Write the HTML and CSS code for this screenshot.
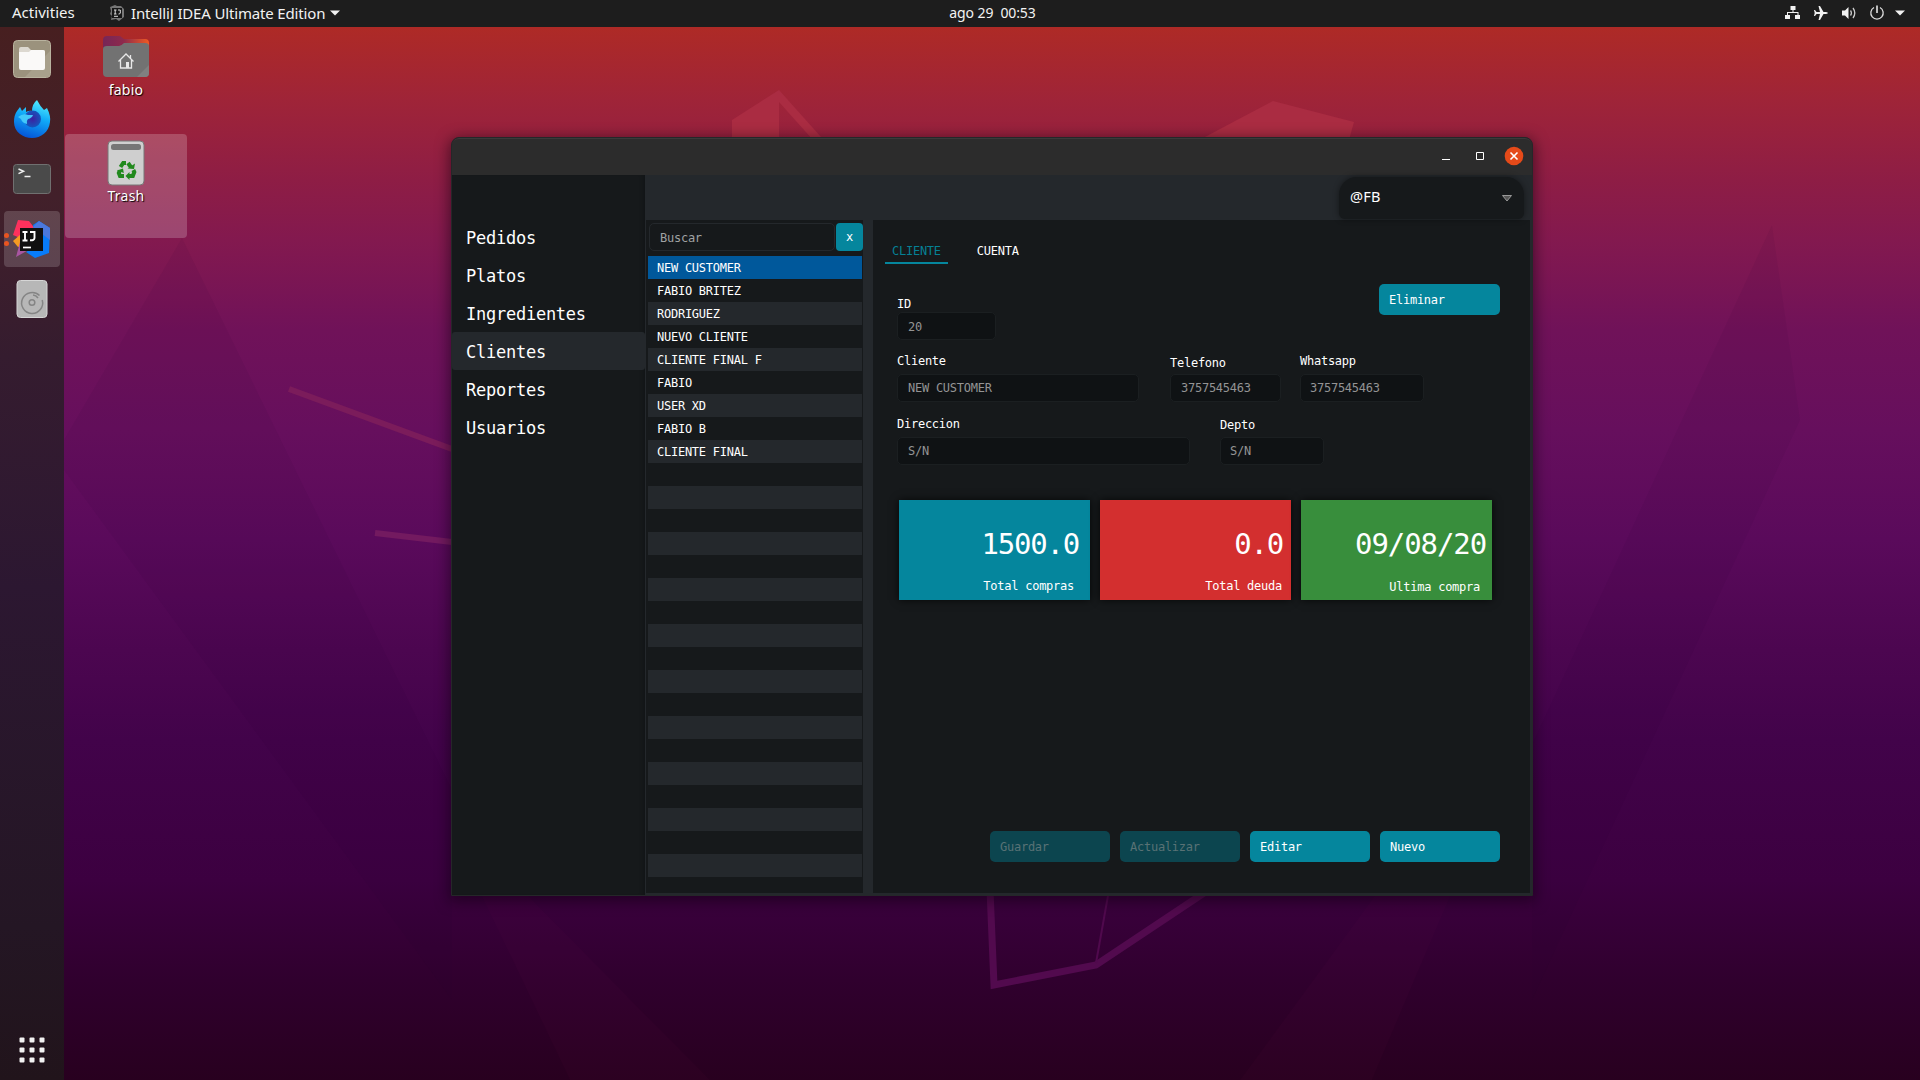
FILE: index.html
```
<!DOCTYPE html>
<html lang="es">
<head>
<meta charset="utf-8">
<title>Clientes</title>
<link rel="stylesheet" href="styles.css">
</head>
<body>
<svg class="wallpaper" viewBox="0 0 1920 1080" aria-hidden="true">
  <g fill="#1c0030" fill-opacity=".06">
    <path d="M182 238L64 440V470L452 1000V790Z"/>
    <path d="M1772 225L1532 745V1000L1800 420Z"/>
  </g>
  <g fill="#ff2090" fill-opacity=".02">
    <path d="M482 896H528L710 1080H570Z"/>
    <path d="M1375 896H1450L1372 1080H1240Z"/>
  </g>
  <g fill="#aa2c42">
    <path d="M732 120L779 90V137H732Z"/>
    <path d="M779 90L821 137V140H813L779 102Z"/>
    <path d="M1203 138L1273 101L1354 122L1349 140Z"/>
  </g>
  <path d="M289 389L452 449" stroke="#7b1c5b" stroke-width="6"/>
  <path d="M375 533L452 542" stroke="#731a60" stroke-width="6"/>
  <path d="M990 890L994 985L1096 965L1210 889" fill="none" stroke="#520a4e" stroke-width="7"/>
  <path d="M1109 890L1096 963" stroke="#50094d" stroke-width="2"/>
</svg>

<header class="topbar">
  <span class="activities">Activities</span>
  <div class="appmenu">
    <svg width="16" height="16" viewBox="0 0 16 16"><path d="M1 2L6 0L8 1L12 1L15 4V12L10 16L7 14L2 15L3 11L1 9L2 6Z" fill="#777"/><path d="M3 3h10v10H3z" fill="#171717"/><path d="M5 5h2.500M6.200 5v4M5 9h2.500M9 5h2.300v3q0 1-1.800 1M5 11.300h4" stroke="#ddd" fill="none"/></svg>
    <span class="appname">IntelliJ IDEA Ultimate Edition</span>
    <svg width="10" height="6" viewBox="0 0 10 6"><path d="M0 .5h10L5 5.500z" fill="#f2f2f2"/></svg>
  </div>
  <span class="clock">ago 29&nbsp; 00:53</span>
  <div class="tray">
    <svg width="16" height="16" viewBox="0 0 16 16"><path d="M5.500 1h5v4h-2v2h5v3h1.500v4h-5v-4h2.500V8H3v2h2v4H0v-4h2V7h5.500V5h-2z" fill="#f2f2f2"/></svg>
    <svg width="16" height="16" viewBox="0 0 16 16"><path d="M1 5h1l1.500 2H7L5.500 1H7l3.500 6H13q2 .5 2 1t-2 1h-2.500L7 15H5.500L7 9H3.500L2 11H1l.7-3z" fill="#f2f2f2"/></svg>
    <svg width="16" height="16" viewBox="0 0 16 16"><path d="M1 5.500h3L7.500 2v12L4 10.500H1z" fill="#f2f2f2"/><path d="M9.500 5.500q1.800 2.500 0 5M12 3q3.600 5 0 10" fill="none" stroke="#ccc" stroke-width="1.300"/></svg>
    <svg width="16" height="16" viewBox="0 0 16 16"><path d="M5 2.500A6.200 6.200 0 1 0 11 2.500" fill="none" stroke="#ddd" stroke-width="1.300"/><path d="M8 .5V8" stroke="#f2f2f2" stroke-width="1.500"/></svg>
    <svg class="caret" width="10" height="6" viewBox="0 0 10 6"><path d="M0 .5h10L5 5.500z" fill="#f2f2f2"/></svg>
  </div>
</header>

<div class="desktop">
<nav class="dock">
  <div class="slot">
    <svg width="38" height="38" viewBox="0 0 38 38"><rect x=".5" y=".5" width="37" height="37" rx="4" fill="#9b927d" stroke="#b9b39f"/><path d="M37 11V33a4 4 0 0 1-4 4H12z" fill="#a8a08c"/><path d="M6 9q0-2 2-2h7l3 3h12q2 0 2 2v5H6z" fill="#dcd8d0"/><path d="M6 12h10l2-2h12q2 0 2 2v16q0 2-2 2H8q-2 0-2-2z" fill="#faf9f8"/></svg>
  </div>
  <div class="slot">
    <svg width="38" height="38" viewBox="0 0 38 38"><defs><linearGradient id="fx" x1=".7" y1="0" x2=".4" y2="1"><stop offset="0" stop-color="#55efff"/><stop offset=".45" stop-color="#10aaf8"/><stop offset="1" stop-color="#0555d8"/></linearGradient><radialGradient id="globe"><stop offset="0" stop-color="#3d20a0"/><stop offset="1" stop-color="#1555bc"/></radialGradient></defs><path d="M4 11L7 7L9 11L13 7V12Q17 10 19 11Q19 4 24 0Q27 6 31 10L34 8Q38 16 37 22C36 32 28 38 19 38S1 32 1 22Q1 15 4 11Z" fill="url(#fx)"/><circle cx="19.500" cy="19" r="8.500" fill="url(#globe)"/><path d="M5 17q5-4 10-2h5q-1 3-5 4-2 2-1 5-5-1-6-5z" fill="#42c8fa"/></svg>
  </div>
  <div class="slot">
    <svg width="38" height="38" viewBox="0 0 38 38"><rect x=".5" y="4.500" width="37" height="29" rx="3" fill="#4a4a4a" stroke="#707070"/><path d="M5.500 9l5 2.300L5.500 13.600M11.500 16.500h6" fill="none" stroke="#eee" stroke-width="1.500"/></svg>
  </div>
  <div class="slot slot-active">
    <span class="dots"><i></i><i></i></span>
    <svg width="38" height="38" viewBox="0 0 38 38"><path d="M5 0L16 1L23 10L12 20L0 15Z" fill="#fe315d"/><path d="M0 21L8 14L12 25L5 27Z" fill="#f59a22"/><path d="M7 22L19 28L3 37Z" fill="#a855a0"/><path d="M20 5L26 1L37 8L36 33L22 38L13 32L24 25Z" fill="#087cfa"/><path d="M20 7L26 1L37 8V20Z" fill="#4b78dc"/><path d="M7 8h23v23H7z" fill="#101010"/><path d="M9.500 12h5M12 12v8M9.500 20.500h5M17 12h4.500v6q0 2.500-4.500 2.300" fill="none" stroke="#fff" stroke-width="1.900"/><path d="M10 27.500h8" stroke="#fff" stroke-width="1.700"/></svg>
  </div>
  <div class="slot">
    <svg width="32" height="38" viewBox="0 0 32 38"><rect x="1" y=".5" width="30" height="37" rx="3.500" fill="#b7b7b7" stroke="#d6d6d6"/><path d="M23.500 15.500A10.500 10.500 0 1 0 26.200 20" fill="none" stroke="#858585" stroke-width="1.500"/><circle cx="16" cy="22.500" r="2.800" fill="none" stroke="#858585" stroke-width="1.500"/><path d="M17 15a7 7 0 0 1 5 3" fill="none" stroke="#858585" stroke-width="1.500"/></svg>
  </div>
  <svg class="apps" width="26" height="26" viewBox="0 0 26 26"><g fill="#f2f2f2"><rect x=".5" y=".5" width="5" height="5" rx="1"/><rect x="10.500" y=".5" width="5" height="5" rx="1"/><rect x="20.500" y=".5" width="5" height="5" rx="1"/><rect x=".5" y="10.500" width="5" height="5" rx="1"/><rect x="10.500" y="10.500" width="5" height="5" rx="1"/><rect x="20.500" y="10.500" width="5" height="5" rx="1"/><rect x=".5" y="20.500" width="5" height="5" rx="1"/><rect x="10.500" y="20.500" width="5" height="5" rx="1"/><rect x="20.500" y="20.500" width="5" height="5" rx="1"/></g></svg>
</nav>
<div class="icons">
  <div class="shortcut">
    <svg width="46" height="44" viewBox="0 0 46 44"><defs><linearGradient id="tab"><stop offset="0" stop-color="#762657"/><stop offset=".45" stop-color="#8e2a4c"/><stop offset="1" stop-color="#f05a22"/></linearGradient></defs><path d="M0 5q0-4 4-4h13l4 3h21q4 0 4 4v20H0z" fill="url(#tab)"/><path d="M0 14q0-3 4-3h12q2 0 5-3h21q4 0 4 3v27q0 4-4 4H4q-4 0-4-4z" fill="#727272"/><path d="M46 30v8q0 4-4 4h-8z" fill="#808080"/><path d="M15.500 26.500L23 19l7.500 7.500M17.500 25v8h11v-8M27.500 20v3" fill="none" stroke="#e8e8e8" stroke-width="1.300"/><path d="M23 27h3v6h-3z" fill="#e8e8e8"/></svg>
    <span>fabio</span>
  </div>
  <div class="shortcut shortcut-on">
    <svg width="38" height="46" viewBox="0 0 38 46"><rect x="1" y="1" width="36" height="44" rx="4" fill="#cfcfcf" stroke="#777"/><rect x="4" y="4" width="30" height="6" rx="2.500" fill="#767676"/><g fill="none" stroke="#21891d" stroke-width="4"><path d="M13.500 27L16.200 23H19"/><path d="M21 23l2.800 4"/><path d="M26.300 30l1 2-1.500 4H22"/><path d="M17 36h-4L11.800 33l1-2.500"/></g><path d="M20.500 28.500l6.500.5 1-5.500zM22.500 32v8L18.500 36z" fill="#21891d"/><path d="M10 30.500l6-2 .8 4.500z" fill="#21891d"/></svg>
    <span>Trash</span>
  </div>
</div>

<main class="window">
  <div class="titlebar">
    <svg width="12" height="12" viewBox="0 0 12 12"><path d="M2 9.500h8" stroke="#fff"/></svg>
    <svg width="12" height="12" viewBox="0 0 12 12"><path d="M2.500 2.500h7v7h-7z" fill="none" stroke="#fff"/></svg>
    <svg width="20" height="20" viewBox="0 0 20 20"><circle cx="10" cy="10" r="9.300" fill="#e54a19"/><path d="M6.500 6.500l7 7M13.500 6.500l-7 7" stroke="#fff" stroke-width="1.600"/></svg>
  </div>
  <div class="app">
    <nav class="menu">
      <a>Pedidos</a><a>Platos</a><a>Ingredientes</a><a class="menu-on">Clientes</a><a>Reportes</a><a>Usuarios</a>
    </nav>
    <div class="work">
      <div class="head">
        <div class="user"><span>@FB</span><svg width="10" height="7" viewBox="0 0 10 7"><path d="M.5 .5h9L5 6z" fill="#555" stroke="#999"/></svg></div>
      </div>
      <div class="panes">
        <section class="list">
          <div class="search"><div class="query">Buscar</div><div class="clear">x</div></div>
          <div class="rows">
            <div class="row row-on">NEW CUSTOMER</div><div class="row">FABIO BRITEZ</div><div class="row">RODRIGUEZ</div><div class="row">NUEVO CLIENTE</div><div class="row">CLIENTE FINAL F</div><div class="row">FABIO</div><div class="row">USER XD</div><div class="row">FABIO B</div><div class="row">CLIENTE FINAL</div>
            <div class="row"></div><div class="row"></div><div class="row"></div><div class="row"></div><div class="row"></div><div class="row"></div><div class="row"></div><div class="row"></div><div class="row"></div><div class="row"></div><div class="row"></div><div class="row"></div><div class="row"></div><div class="row"></div><div class="row"></div><div class="row"></div><div class="row"></div><div class="row"></div><div class="row"></div>
          </div>
        </section>
        <section class="detail">
          <div class="tabs"><span class="tab tab-on">CLIENTE</span><span class="tab">CUENTA</span></div>
          <div class="line line-id">
            <label class="field w-id">ID<span class="input">20</span></label>
            <span class="btn btn-delete">Eliminar</span>
          </div>
          <div class="line line-name">
            <label class="field w-name">Cliente<span class="input">NEW CUSTOMER</span></label>
            <label class="field w-phone low">Telefono<span class="input">3757545463</span></label>
            <label class="field w-whats">Whatsapp<span class="input">3757545463</span></label>
          </div>
          <div class="line line-addr">
            <label class="field w-addr">Direccion<span class="input">S/N</span></label>
            <label class="field w-depto lower">Depto<span class="input">S/N</span></label>
          </div>
          <div class="cards">
            <div class="card teal"><b>1500.0</b><span>Total compras</span></div>
            <div class="card red"><b>0.0</b><span>Total deuda</span></div>
            <div class="card green"><b>09/08/20</b><span>Ultima compra</span></div>
          </div>
          <div class="actions">
            <span class="btn btn-off">Guardar</span><span class="btn btn-off">Actualizar</span><span class="btn">Editar</span><span class="btn">Nuevo</span>
          </div>
        </section>
      </div>
    </div>
  </div>
</main>
</div>
</body>
</html>
```
FILE: styles.css
```
* { box-sizing: border-box; }
body {
  margin: 0;
  width: 1920px;
  height: 1080px;
  overflow: hidden;
  display: flex;
  flex-direction: column;
  color: #fff;
  font: 14px "Noto Sans", sans-serif;
  background: linear-gradient(#ae2a26 27px, #9f2438 100px, #8e1d45 180px, #83194f 240px, #701259 330px, #660f5d 430px, #5a0a5b 540px, #4c0650 650px, #42034a 740px, #3c0040 880px, #30002e 980px, #28001f 1080px);
}
svg { display: block; flex: none; }
.wallpaper { position: absolute; left: 0; top: 0; width: 1920px; height: 1080px; }

.topbar {
  position: relative;
  height: 27px;
  flex: none;
  display: grid;
  grid-template-columns: 1fr auto 1fr;
  grid-template-areas: "left clock tray";
  align-items: start;
  background: #1d1d1d;
  color: #f2f2f2;
  line-height: 25px;
}
.topbar > * { height: 26px; }
.activities { grid-area: left; padding-left: 12px; font-size: 15px; letter-spacing: .03px; }
.appmenu { grid-area: left; display: flex; align-items: center; padding-left: 109px; }
.appname { margin: 0 5px 0 6px; font-size: 15px; letter-spacing: -.16px; }
.clock { grid-area: clock; letter-spacing: -.1px; margin-left: 65px; }
.tray { grid-area: tray; display: flex; align-items: center; justify-content: flex-end; gap: 12px; padding-right: 15px; }
.caret { margin-left: -2px; }

.desktop { position: relative; flex: 1; display: flex; }
.dock {
  width: 64px;
  padding-top: 4px;
  display: flex;
  flex-direction: column;
  align-items: center;
  gap: 4px;
  background: linear-gradient(#471f20, #42202a 170px, #351c2f 330px, #2c1731 560px, #241624 900px, #21141b);
}
.slot { width: 56px; height: 56px; display: flex; align-items: center; justify-content: center; position: relative; border-radius: 4px; }
.slot-active { background: rgba(255,255,255,.17); }
.dots { position: absolute; left: 0; top: 22px; display: grid; gap: 3px; }
.dots i { width: 5px; height: 5px; border-radius: 50%; background: #e95420; }
.apps { margin: auto 0 17px; }
.icons { padding-left: 1px; }
.shortcut { width: 122px; height: 104px; padding-top: 8px; display: flex; flex-direction: column; align-items: center; text-shadow: 1px 1px 1px #000; line-height: 22px; }
.shortcut span { letter-spacing: .25px; }
.shortcut-on { margin-top: 3px; padding-top: 6px; border-radius: 4px; background: rgba(255,255,255,.2); line-height: 20px; }

.window {
  position: absolute;
  left: 451px;
  top: 110px;
  width: 1082px;
  height: 759px;
  display: flex;
  flex-direction: column;
  border: 1px solid #252729;
  border-radius: 8px 8px 0 0;
  background: #16191b;
  box-shadow: 0 3px 14px 2px rgba(10,0,10,.5);
  font: 12px "DejaVu Sans Mono", monospace;
  letter-spacing: -.25px;
}
.titlebar { height: 37px; flex: none; display: flex; align-items: center; justify-content: flex-end; gap: 22px; padding: 0 8px 2px 0; border-top: 1px solid #3a3a3a; border-radius: 7px 7px 0 0; background: #2c2c2c; }
.titlebar svg:last-child { margin-left: -4px; }
.app { flex: 1; display: flex; min-height: 0; }
.menu { width: 193px; padding-top: 43px; background: #16191b; box-shadow: inset -5px 0 5px -4px rgba(0,0,0,.25); font-size: 17px; letter-spacing: -.25px; }
.menu a { display: block; height: 38px; line-height: 41px; padding-left: 14px; }
.menu-on { background: #24282c; border-radius: 3px; }
.work { flex: 1; min-width: 0; display: flex; flex-direction: column; }
.head { height: 45px; flex: none; padding: 2px 8px 1px 0; display: flex; justify-content: flex-end; background: #24282c; }
.user { width: 185px; padding: 0 12px 0 11px; display: flex; align-items: center; justify-content: space-between; background: #16191b; border-radius: 18px 18px 6px 6px; box-shadow: 0 0 6px rgba(0,0,0,.45); font: 14.500px "Noto Sans", sans-serif; letter-spacing: .2px; }
.user span { margin-top: -4px; }
.panes { flex: 1; min-height: 0; display: flex; border: solid #24282c; border-width: 0 2px 2px 1px; }
.list { width: 227px; padding: 3px 1px 0 2px; border-right: 10px solid #24282c; overflow: hidden; }
.search { display: flex; gap: 1px; height: 28px; padding-left: 1px; margin: 0 -1px 5px 0; }
.query { flex: 1; border: 1px solid #24282c; border-radius: 5px; padding-left: 10px; line-height: 28px; color: #a0a2a3; }
.clear { width: 27px; border-radius: 4px; background: #05869d; text-align: center; line-height: 28px; }
.row { height: 23px; line-height: 25px; padding-left: 9px; }
.row:nth-child(odd) { background: #24282c; }
.rows .row-on { background: #00589b; }
.detail { flex: 1; min-width: 0; display: flex; flex-direction: column; padding: 17px 30px 31px 12px; }
.tabs { display: flex; gap: 22px; }
.tab { height: 27px; line-height: 29px; padding: 0 7px; border-bottom: 2px solid transparent; }
.tab-on { color: #058095; border-color: #05869d; }
.line { display: flex; padding-left: 12px; }
.line-id { justify-content: space-between; margin-top: 20px; }
.line-id .field { margin-top: 12px; }
.line-name { margin-top: 13px; }
.line-addr { margin-top: 14px; }
.field { display: block; line-height: 16px; }
.field .input { display: block; height: 28px; margin-top: 5px; padding-left: 10px; border: 1px solid #1b1f21; border-radius: 5px; background: #0f1214; color: #949494; line-height: 26px; }
.line-id .input { margin-top: 0; line-height: 28px; }
.line .low { padding-top: 2px; }
.low .input { margin-top: 3px; }
.line .lower { padding-top: 1px; }
.lower .input { margin-top: 4px; }
.w-id { width: 99px; }
.w-name { width: 242px; margin-right: 31px; }
.w-phone { width: 111px; margin-right: 19px; }
.w-whats { width: 124px; }
.w-whats .input { padding-left: 9px; }
.w-addr { width: 293px; margin-right: 30px; }
.w-depto { width: 104px; }
.w-depto .input { padding-left: 9px; }
.btn { width: 120px; height: 31px; line-height: 32px; padding-left: 10px; border-radius: 5px; background: #05869d; }
.btn-delete { width: 121px; }
.btn-off { background: #0c454f; color: #597275; }
.cards { display: flex; gap: 10px; margin: 35px 0 0 14px; }
.card { width: 191px; height: 100px; display: flex; flex-direction: column; align-items: flex-end; box-shadow: 0 0 8px rgba(0,0,0,.75); }
.card b { font-size: 29px; font-weight: 400; letter-spacing: -1.2px; line-height: 40px; margin: 24px 11px 0 0; }
.card span { line-height: 16px; margin: 14px 16px 0 0; }
.teal { background: #05869d; }
.red { background: #d32f2f; }
.green { background: #388e3c; }
.red b { margin-right: 8px; }
.red span { margin-right: 9px; }
.green b { margin-right: 6px; letter-spacing: -1.1px; }
.green span { margin: 15px 12px 0 0; }
.actions { margin-top: auto; display: flex; justify-content: flex-end; gap: 10px; }
```
